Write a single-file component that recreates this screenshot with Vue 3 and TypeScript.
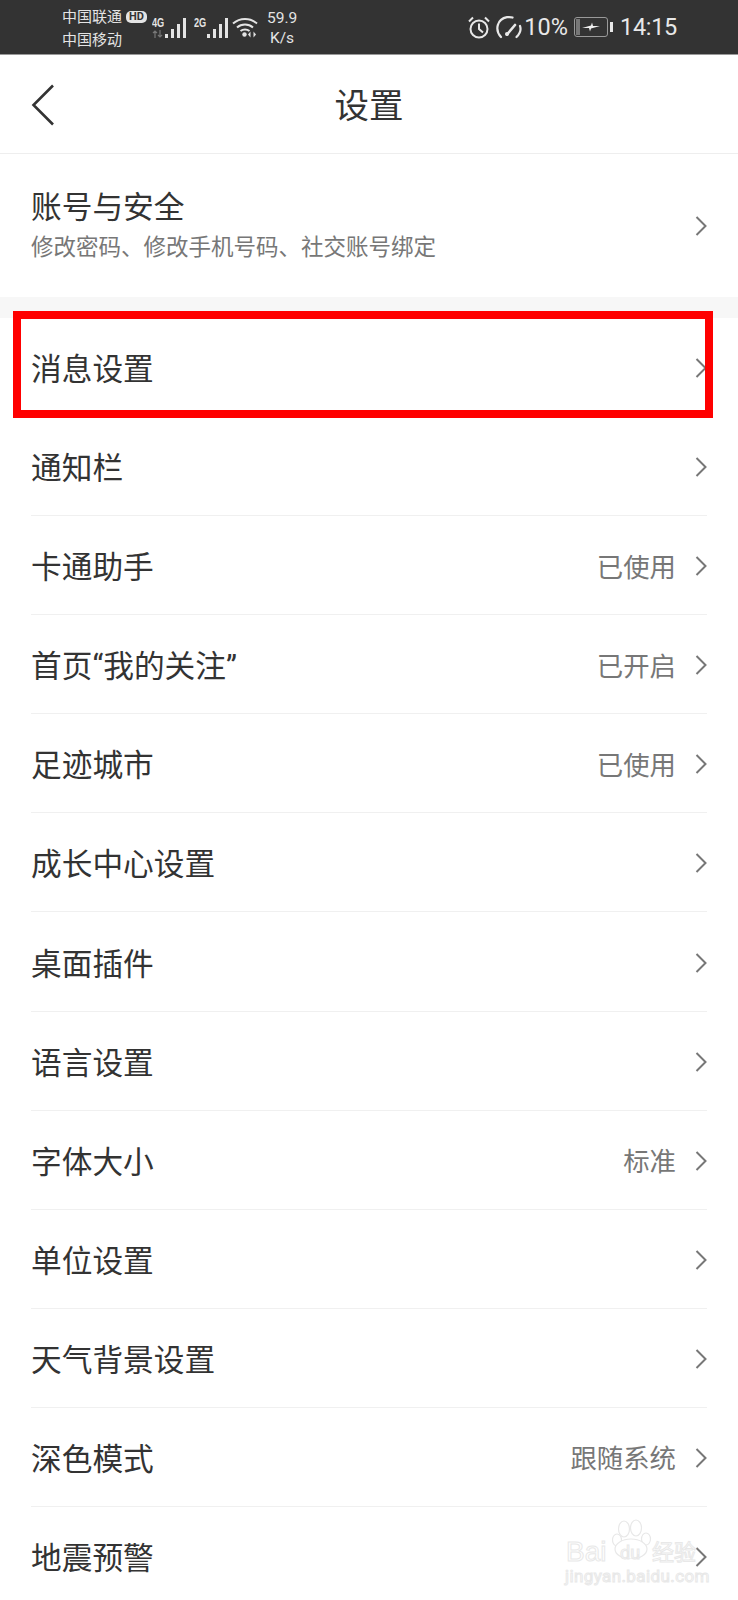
<script setup lang="ts">
interface SettingRow {
	readonly label: string
	readonly value?: string
	readonly marked?: boolean
}

const rows: SettingRow[] = [
	{ label: '消息设置', marked: true },
	{ label: '通知栏' },
	{ label: '卡通助手', value: '已使用' },
	{ label: '首页“我的关注”', value: '已开启' },
	{ label: '足迹城市', value: '已使用' },
	{ label: '成长中心设置' },
	{ label: '桌面插件' },
	{ label: '语言设置' },
	{ label: '字体大小', value: '标准' },
	{ label: '单位设置' },
	{ label: '天气背景设置' },
	{ label: '深色模式', value: '跟随系统' },
	{ label: '地震预警' },
]

const bars = [4, 9, 14, 20]
</script>

<template>
	<div class="page">
		<div class="status">
			<div class="carriers">
				<div class="carrier">中国联通<span class="hd">HD</span></div>
				<div class="carrier">中国移动</div>
			</div>
			<div class="signal signal--first">
				<div class="net">
					<span>4G</span>
					<svg class="arrows" width="12" height="8" viewBox="0 0 12 8">
						<path d="M3 8V1M1 3l2-2 2 2M8 0v7M6 5l2 2 2-2" fill="none" stroke="#777" stroke-width="1.2" />
					</svg>
				</div>
				<div class="bars">
					<i v-for="h in bars" :key="h" :style="{ height: h + 'px' }" />
				</div>
			</div>
			<div class="signal">
				<div class="net"><span>2G</span><svg class="arrows" width="12" height="8" /></div>
				<div class="bars">
					<i v-for="h in bars" :key="h" :style="{ height: h + 'px' }" />
				</div>
			</div>
			<svg class="wifi" width="26" height="21" viewBox="0 0 26 21" fill="none" stroke="#e4e4e4" stroke-width="2">
				<path d="M1 6.5C8 0.5 18 0.5 25 6.5" />
				<path d="M5 10.5C9.5 6.5 16.5 6.5 21 10.5" />
				<path d="M8.5 14C11 12 15 12 17.5 14" />
				<circle cx="12.5" cy="17.5" r="2.2" fill="#e4e4e4" stroke="none" />
				<path d="M18.5 14.5v6l-2.5-3zM21.5 14.5v6l2.5-3z" fill="#e4e4e4" stroke="none" />
			</svg>
			<div class="speed">
				<div>59.9</div>
				<div>K/s</div>
			</div>
			<svg class="alarm" width="22" height="23" viewBox="0 0 22 23" fill="none" stroke="#e8e8e8" stroke-width="2">
				<circle cx="11" cy="13" r="8.5" />
				<path d="M11 7.5V13l4 3.5M1 5.5 5 1.5M21 5.5l-4-4" />
			</svg>
			<svg class="gauge" width="27" height="24" viewBox="0 0 27 24" fill="none" stroke="#e8e8e8" stroke-width="2.2" stroke-linecap="round">
				<path d="M6 22C-0.5 15 2 4 12 2.2c2-.3 4-.2 5.5.4" />
				<path d="M25 11c1.5 4-.5 8-3.5 11" />
				<path d="M12 19.5 20 10" stroke-width="2.6" />
				<circle cx="12" cy="19" r="2" fill="#e8e8e8" stroke="none" />
			</svg>
			<span class="percent">10%</span>
			<div class="battery">
				<div class="battery__body">
					<i class="battery__level" />
					<svg width="18" height="10" viewBox="0 0 18 10">
						<path d="M0 6 9 3.5 10 0.5 11 4 18 4 9 6.5 8 9.5 7 6z" fill="#f0f0f0" />
					</svg>
				</div>
				<i class="battery__nub" />
			</div>
			<span class="clock">14:15</span>
		</div>

		<header class="nav">
			<svg class="nav__back" width="24" height="42" viewBox="0 0 24 42" fill="none" stroke="#333" stroke-width="2.6">
				<path d="M22 1.5 2.5 21 22 40.5" />
			</svg>
			<h1 class="nav__title">设置</h1>
		</header>

		<section class="account">
			<div class="account__text">
				<div class="row__label">账号与安全</div>
				<div class="account__sub">修改密码、修改手机号码、社交账号绑定</div>
			</div>
			<svg class="chevron" width="12" height="20" viewBox="0 0 12 20" fill="none" stroke="#777" stroke-width="2">
				<path d="M1.5 1 10.5 10 1.5 19" />
			</svg>
		</section>

		<ul class="list">
			<li v-for="row in rows" :key="row.label" class="row">
				<span class="row__label">{{ row.label }}</span>
				<span v-if="row.value" class="row__value">{{ row.value }}</span>
				<svg class="chevron chevron--row" width="12" height="20" viewBox="0 0 12 20" fill="none" stroke="#777" stroke-width="2">
					<path d="M1.5 1 10.5 10 1.5 19" />
				</svg>
				<div v-if="row.marked" class="row__mark" />
			</li>
		</ul>

		<div class="watermark">
			<svg class="watermark__paw" width="40" height="40" viewBox="0 0 40 40" fill="#fff" stroke="#e8e8e8" stroke-width="1.2">
				<ellipse cx="12" cy="10" rx="5.5" ry="8" />
				<ellipse cx="24" cy="9" rx="5.5" ry="8" />
				<ellipse cx="34" cy="20" rx="4.5" ry="6" />
				<ellipse cx="5" cy="21" rx="4.5" ry="6" />
				<ellipse cx="19" cy="30" rx="16" ry="10" />
			</svg>
			<span class="watermark__bai">Bai</span>
			<span class="watermark__du">du</span>
			<span class="watermark__jy">经验</span>
			<span class="watermark__url">jingyan.baidu.com</span>
		</div>
	</div>
</template>

<style>
body {
	background: #fff;
}
</style>

<style scoped>
.page {
	position: relative;
	width: 738px;
	height: 1600px;
	overflow: hidden;
	background: #fff;
	font-family: Roboto, 'Noto Sans CJK SC', sans-serif;
	color: #333;
}

.status {
	display: flex;
	align-items: center;
	box-sizing: border-box;
	height: 55px;
	padding: 0 61px 0 62px;
	background: #333;
	color: #e4e4e4;
	border-bottom: 1px solid #999;
}

.carriers {
	width: 90px;
	margin-top: 3px;
	font-size: 15px;
	line-height: 23px;
}

.carrier {
	display: flex;
	align-items: center;
	white-space: nowrap;
}

.hd {
	margin-left: 4px;
	padding: 0 3px;
	border-radius: 5px;
	background: #e4e4e4;
	color: #333;
	font-size: 11px;
	font-weight: 700;
	line-height: 12px;
}

.signal {
	display: flex;
	align-items: flex-end;
	margin-left: 7px;
}

.signal--first {
	margin-left: 0;
}

.net {
	display: flex;
	flex-direction: column;
	width: 13px;
	font-family: 'Liberation Sans', sans-serif;
	font-size: 13.5px;
	font-weight: 700;
	line-height: 12px;
}

.net span {
	display: block;
	transform: scaleX(0.68);
	transform-origin: left;
}

.arrows {
	margin-top: 1px;
}

.bars {
	display: flex;
	align-items: flex-end;
	gap: 3px;
	width: 22px;
	height: 20px;
}

.bars i {
	display: block;
	width: 3px;
	background: #e4e4e4;
}

.wifi {
	margin-left: 3px;
}

.speed {
	width: 30px;
	margin: 1px 0 0 9px;
	font-size: 15.5px;
	line-height: 20px;
	text-align: center;
}

.alarm {
	margin-left: auto;
}

.gauge {
	margin-left: 5px;
}

.percent {
	margin-left: 2px;
	font-size: 23.5px;
	color: #e8e8e8;
}

.battery {
	display: flex;
	align-items: center;
	margin-left: 6px;
}

.battery__body {
	position: relative;
	display: flex;
	align-items: center;
	justify-content: center;
	box-sizing: border-box;
	width: 34px;
	height: 20px;
	border: 1px solid #999;
	border-radius: 3px;
}

.battery__level {
	position: absolute;
	left: 1px;
	top: 1px;
	bottom: 1px;
	width: 4px;
	background: #777;
}

.battery__nub {
	width: 3px;
	height: 10px;
	margin-left: 2px;
	background: #e8e8e8;
}

.clock {
	margin-left: 7px;
	font-size: 23.5px;
	letter-spacing: -0.3px;
	color: #e8e8e8;
}

.nav {
	position: relative;
	display: flex;
	align-items: center;
	justify-content: center;
	box-sizing: border-box;
	height: 99px;
	padding-top: 5px;
	border-bottom: 1px solid #eee;
}

.nav__back {
	position: absolute;
	left: 31px;
	top: 29px;
}

.nav__title {
	margin: 0;
	font-size: 34.5px;
	font-weight: 400;
	line-height: 1;
}

.account {
	display: flex;
	align-items: center;
	justify-content: space-between;
	box-sizing: border-box;
	height: 143px;
	padding: 0 31px;
}

.account__text {
	display: flex;
	flex-direction: column;
	gap: 3px;
}

.account__text .row__label {
	line-height: 40px;
}

.account__sub {
	font-size: 22.5px;
	line-height: 32px;
	color: #777;
}

.list {
	margin: 0;
	padding: 0;
	list-style: none;
	border-top: 21px solid #f7f7f7;
}

.row {
	position: relative;
	display: flex;
	align-items: center;
	box-sizing: border-box;
	height: 99.08px;
	margin: 0 31px;
	border-bottom: 1px solid #f0f0f0;
}

.row .row__label {
	padding-bottom: 1px;
}

.row__label {
	flex: 1;
	font-size: 30.7px;
	color: #333;
}

.row__value {
	margin-right: 19px;
	font-size: 26.4px;
	color: #777;
}

.chevron {
	flex: none;
}

.chevron--row {
	margin-top: 2px;
}

.row__mark {
	position: absolute;
	left: -18px;
	right: -6px;
	top: -7px;
	height: 107px;
	box-sizing: border-box;
	border: 8px solid #f00;
}

.watermark {
	position: absolute;
	left: 560px;
	top: 1515px;
	width: 145px;
	height: 80px;
	color: #fff;
}

.watermark span {
	position: absolute;
	white-space: nowrap;
	-webkit-text-stroke: 1px #e8e8e8;
}

.watermark__paw {
	position: absolute;
	left: 52px;
	top: 4px;
}

.watermark__bai {
	left: 6px;
	top: 21px;
	font-family: 'Liberation Sans', sans-serif;
	font-size: 28px;
	line-height: 32px;
}

.watermark__du {
	left: 60px;
	top: 27px;
	font-size: 18px;
	line-height: 22px;
}

.watermark__jy {
	left: 92px;
	top: 24px;
	font-size: 22px;
	line-height: 28px;
}

.watermark__url {
	left: 5px;
	top: 51px;
	font-size: 17px;
	line-height: 20px;
	letter-spacing: 0.4px;
}
</style>
